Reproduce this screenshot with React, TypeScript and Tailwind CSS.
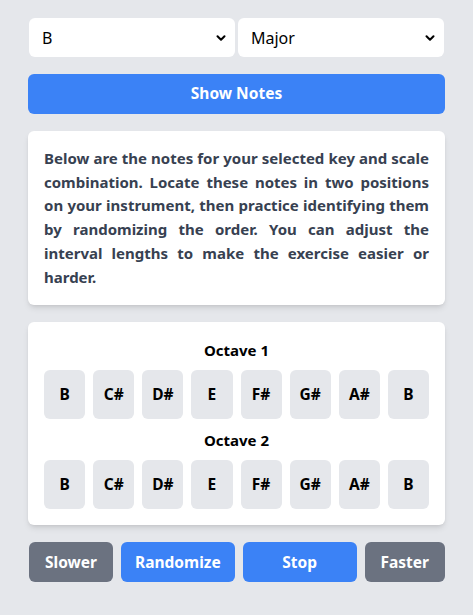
import { ChevronDown } from 'lucide-react';

const notes = ['B', 'C#', 'D#', 'E', 'F#', 'G#', 'A#', 'B'];

function Select({ value }: { value: string }) {
  return (
    <div className="relative flex-1">
      <select
        defaultValue={value}
        className="w-full h-[39px] appearance-none bg-white rounded-md pl-[13px] pr-8 text-[16px] text-black outline-none"
      >
        <option>{value}</option>
      </select>
      <ChevronDown
        size={14}
        strokeWidth={3.5}
        className="absolute right-[7px] top-[13px] text-black pointer-events-none"
      />
    </div>
  );
}

function Octave({ label }: { label: string }) {
  return (
    <div>
      <h2 className="text-center font-bold text-[15px] leading-6 text-black mb-2">
        {label}
      </h2>
      <div className="grid grid-cols-8 gap-2">
        {notes.map((n, i) => (
          <div
            key={i}
            className="h-[49px] bg-[#e5e7eb] rounded-md flex items-center justify-center font-bold text-[15.5px] text-black"
          >
            {n}
          </div>
        ))}
      </div>
    </div>
  );
}

export default function App() {
  return (
    <div
      className="min-h-screen bg-[#e5e7eb] px-[28px] pt-[18px] pb-8"
      style={{ fontFamily: '"Noto Sans", "Open Sans", sans-serif' }}
    >
      <div className="flex flex-col gap-[17px]">
        <div className="flex gap-[3px] pl-px pr-px">
          <Select value="B" />
          <Select value="Major" />
        </div>
        <button className="h-10 w-full bg-[#3b82f6] rounded-md text-white font-bold text-[15.5px]">
          Show Notes
        </button>
        <div className="bg-white rounded-md shadow-md px-4 py-4">
          <p className="text-[#374151] font-bold text-[15px] leading-[23.7px] text-justify">
            Below are the notes for your selected key and scale combination.
            Locate these notes in two positions on your instrument, then
            practice identifying them by randomizing the order. You can adjust
            the interval lengths to make the exercise easier or harder.
          </p>
        </div>
        <div className="bg-white rounded-md shadow-md px-4 pt-4 pb-4 flex flex-col gap-[9px]">
          <Octave label="Octave 1" />
          <Octave label="Octave 2" />
        </div>
        <div className="flex gap-2 pl-px">
          <button className="h-10 px-4 bg-[#6b7280] rounded-md text-white font-bold text-[15.5px]">
            Slower
          </button>
          <button className="h-10 flex-1 bg-[#3b82f6] rounded-md text-white font-bold text-[15.5px]">
            Randomize
          </button>
          <button className="h-10 flex-1 bg-[#3b82f6] rounded-md text-white font-bold text-[15.5px]">
            Stop
          </button>
          <button className="h-10 px-4 bg-[#6b7280] rounded-md text-white font-bold text-[15.5px]">
            Faster
          </button>
        </div>
      </div>
    </div>
  );
}
